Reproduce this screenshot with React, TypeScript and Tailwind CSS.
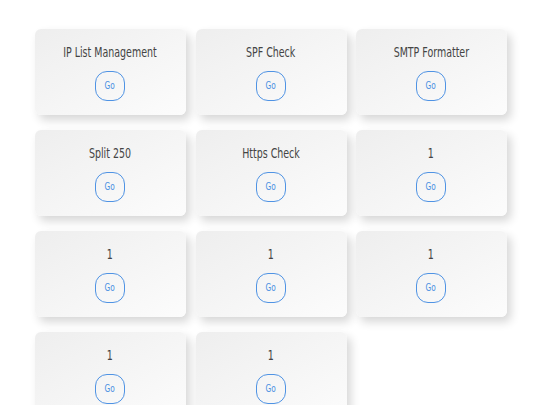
import React from "react";

const tools = [
  "IP List Management",
  "SPF Check",
  "SMTP Formatter",
  "Split 250",
  "Https Check",
  "1",
  "1",
  "1",
  "1",
  "1",
  "1",
];

function ToolCard({ title }: { title: string }) {
  return (
    <div className="flex h-[86px] w-[151px] flex-col items-center rounded-md bg-gradient-to-br from-[#eeeeee] to-[#fcfcfc] pt-[15px] shadow-[4px_5px_10px_rgba(0,0,0,0.16)]">
      <h3 className="scale-x-[0.78] whitespace-nowrap text-[13.5px] leading-[16px] text-[#444444]">
        {title}
      </h3>
      <button className="mt-[11px] flex h-[30px] w-[30px] items-center justify-center rounded-[12px] border-[1.75px] border-[#4f93e4] pb-[1px] text-[10.5px] text-[#4a90e2]">
        <span className="scale-x-[0.78]">Go</span>
      </button>
    </div>
  );
}

export default function App() {
  return (
    <div className="min-h-[405px] w-[540px] overflow-hidden bg-white pt-[29px] font-['DejaVu_Sans_Condensed','DejaVu_Sans',sans-serif]">
      <div className="mx-auto grid w-[471px] grid-cols-[151px_150px_150px] gap-x-[10px] gap-y-[15px]">
        {tools.map((t, i) => (
          <ToolCard key={i} title={t} />
        ))}
      </div>
    </div>
  );
}
